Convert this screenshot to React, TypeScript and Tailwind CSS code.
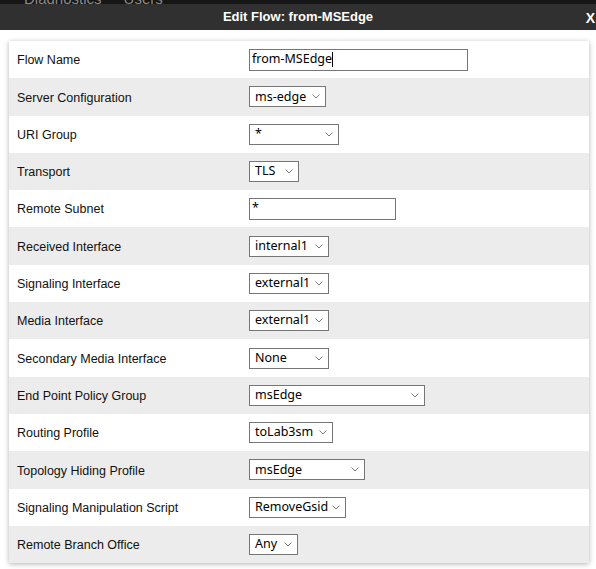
import React from 'react';

type Field =
  | { label: string; kind: 'input'; value: string; width: number; caret?: boolean }
  | { label: string; kind: 'select'; value: string; width: number };

const fields: Field[] = [
  { label: 'Flow Name', kind: 'input', value: 'from-MSEdge', width: 219, caret: true },
  { label: 'Server Configuration', kind: 'select', value: 'ms-edge', width: 77 },
  { label: 'URI Group', kind: 'select', value: '*', width: 90 },
  { label: 'Transport', kind: 'select', value: 'TLS', width: 50 },
  { label: 'Remote Subnet', kind: 'input', value: '*', width: 147 },
  { label: 'Received Interface', kind: 'select', value: 'internal1', width: 80 },
  { label: 'Signaling Interface', kind: 'select', value: 'external1', width: 80 },
  { label: 'Media Interface', kind: 'select', value: 'external1', width: 80 },
  { label: 'Secondary Media Interface', kind: 'select', value: 'None', width: 80 },
  { label: 'End Point Policy Group', kind: 'select', value: 'msEdge', width: 176 },
  { label: 'Routing Profile', kind: 'select', value: 'toLab3sm', width: 84 },
  { label: 'Topology Hiding Profile', kind: 'select', value: 'msEdge', width: 116 },
  { label: 'Signaling Manipulation Script', kind: 'select', value: 'RemoveGsid', width: 97 },
  { label: 'Remote Branch Office', kind: 'select', value: 'Any', width: 49 },
];

function Chevron() {
  return (
    <svg width="8" height="5" viewBox="0 0 8 5" className="shrink-0">
      <path d="M0.5 0.5 L4 4 L7.5 0.5" fill="none" stroke="#6b6b6b" strokeWidth="0.9" />
    </svg>
  );
}

function Control({ field }: { field: Field }) {
  if (field.kind === 'input') {
    return (
      <div
        className="h-[22px] border border-[#767676] bg-white flex items-center pl-[2px] text-[12.5px] text-black"
        style={{ width: field.width }}
      >
        <span>{field.value}</span>
        {field.caret && <span className="w-px h-[15px] bg-black" />}
      </div>
    );
  }
  return (
    <div
      className="h-[21px] border border-[#767676] bg-white flex items-center justify-between pl-[5px] pr-[5px] text-[12.5px] text-black"
      style={{ width: field.width }}
    >
      <span>{field.value}</span>
      <Chevron />
    </div>
  );
}

export default function App() {
  return (
    <div className="w-[596px] h-[569px] bg-white overflow-hidden font-['Liberation_Sans',Arial,sans-serif]">
      {/* top nav, mostly hidden behind the dialog */}
      <div className="h-[4px] bg-[#161616] overflow-hidden flex gap-[22px] pl-[24px]">
        <span className="text-[15px] leading-none text-[#8a8a8a] -mt-[9px]">Diagnostics</span>
        <span className="text-[15px] leading-none text-[#8a8a8a] -mt-[9px]">Users</span>
      </div>
      <div className="h-[26px] bg-[#303030] flex items-center relative">
        <div className="flex-1 text-center text-white font-bold text-[13px]">Edit Flow: from-MSEdge</div>
        <span className="absolute right-[1px] top-[4px] text-white font-bold text-[14px]">X</span>
      </div>
      <div className="pt-[11px] pl-[9px] pr-[7px]">
        <div className="shadow-[0_1px_5px_rgba(0,0,0,0.3)]">
          {fields.map((f, i) => (
            <div
              key={f.label}
              className={`h-[37.3px] flex items-center ${i % 2 === 0 ? 'bg-white' : 'bg-[#ececec]'}`}
            >
              <div className="w-[240px] pl-[8px] pt-[2px] text-[12.5px] text-[#111]">{f.label}</div>
              <div className="font-['Noto_Sans','Open_Sans',sans-serif]">
                <Control field={f} />
              </div>
            </div>
          ))}
        </div>
      </div>
    </div>
  );
}
